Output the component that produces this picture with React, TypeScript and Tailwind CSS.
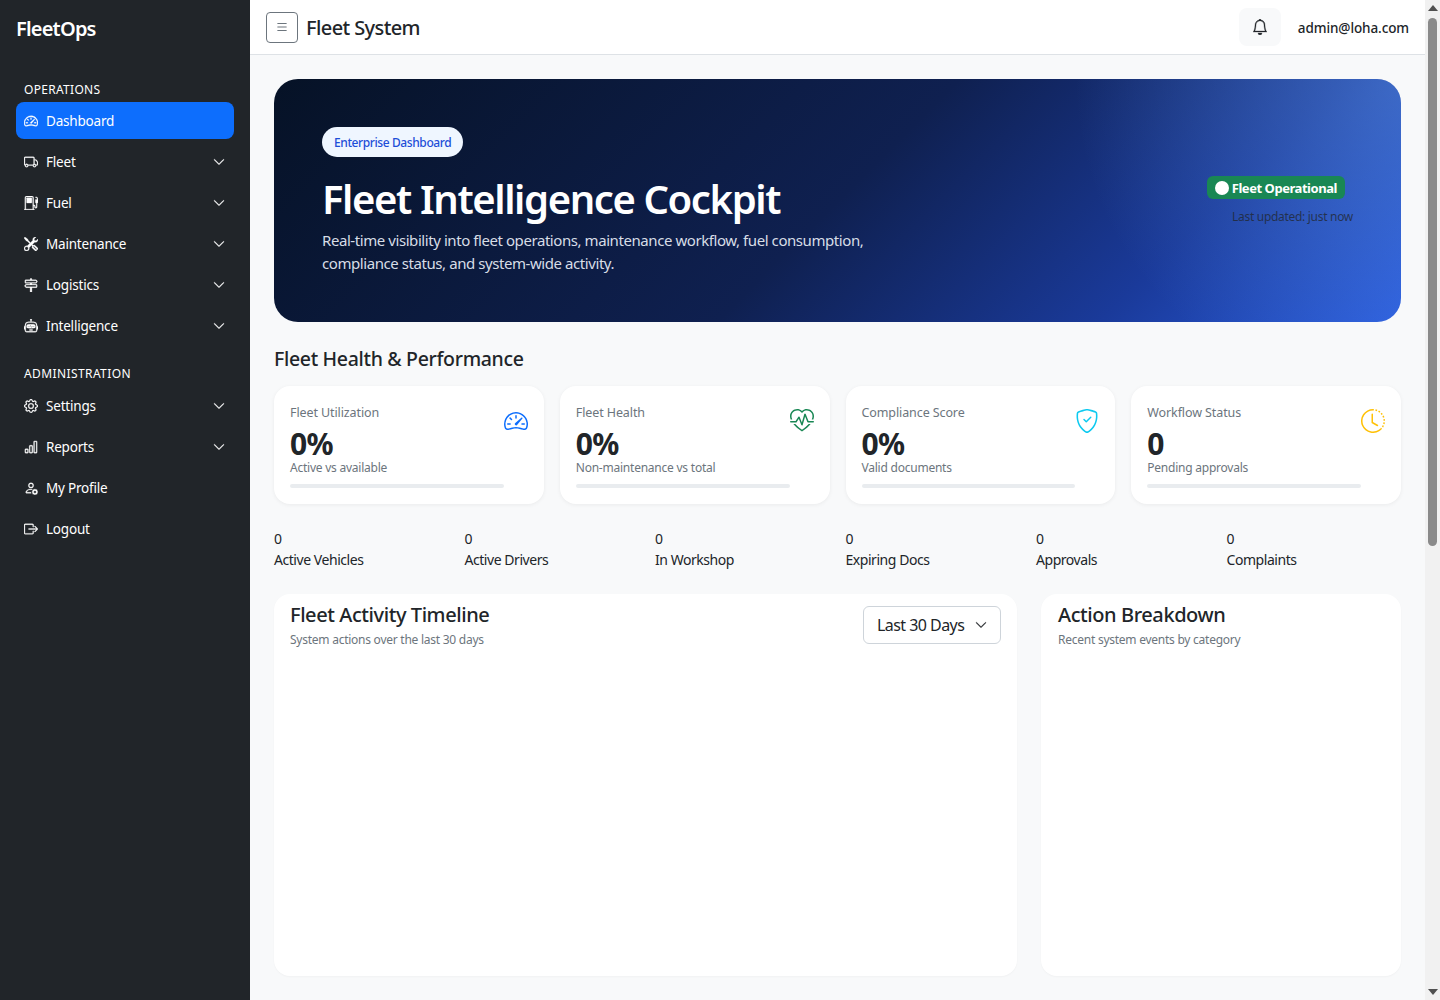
import React from "react";
import type { IconType } from "react-icons";
import {
  BsBarChart,
  BsBell,
  BsBoxArrowRight,
  BsChevronDown,
  BsClockHistory,
  BsFuelPump,
  BsGear,
  BsHeartPulse,
  BsList,
  BsPersonGear,
  BsRobot,
  BsShieldCheck,
  BsSignpost2,
  BsSpeedometer2,
  BsTools,
  BsTruck,
} from "react-icons/bs";

type NavEntry = { label: string; icon: IconType; chevron?: boolean; active?: boolean };

const operations: NavEntry[] = [
  { label: "Dashboard", icon: BsSpeedometer2, active: true },
  { label: "Fleet", icon: BsTruck, chevron: true },
  { label: "Fuel", icon: BsFuelPump, chevron: true },
  { label: "Maintenance", icon: BsTools, chevron: true },
  { label: "Logistics", icon: BsSignpost2, chevron: true },
  { label: "Intelligence", icon: BsRobot, chevron: true },
];

const administration: NavEntry[] = [
  { label: "Settings", icon: BsGear, chevron: true },
  { label: "Reports", icon: BsBarChart, chevron: true },
  { label: "My Profile", icon: BsPersonGear },
  { label: "Logout", icon: BsBoxArrowRight },
];

const kpis = [
  { title: "Fleet Utilization", value: "0%", note: "Active vs available", icon: BsSpeedometer2, color: "text-[#0d6efd]" },
  { title: "Fleet Health", value: "0%", note: "Non-maintenance vs total", icon: BsHeartPulse, color: "text-[#198754]" },
  { title: "Compliance Score", value: "0%", note: "Valid documents", icon: BsShieldCheck, color: "text-[#0dcaf0]" },
  { title: "Workflow Status", value: "0", note: "Pending approvals", icon: BsClockHistory, color: "text-[#ffc107]" },
];

const counters = ["Active Vehicles", "Active Drivers", "In Workshop", "Expiring Docs", "Approvals", "Complaints"];

function NavItem({ item }: { item: NavEntry }) {
  const Icon = item.icon;
  return (
    <a
      className={`flex h-[37px] items-center gap-[8px] rounded-[8px] px-[8px] mb-[4px] text-[13.5px] text-white tracking-[-0.2px] ${
        item.active ? "bg-[#0d6efd]" : ""
      }`}
    >
      <Icon className="h-[14px] w-[14px] shrink-0 stroke-[0.35]" />
      <span className="flex-1 pt-[2px]">{item.label}</span>
      {item.chevron && <BsChevronDown className="mr-[1px] h-[12px] w-[12px] stroke-[0.6]" />}
    </a>
  );
}

function Sidebar() {
  return (
    <aside className="flex h-screen w-[250px] shrink-0 flex-col bg-[#212529] px-[16px] text-white">
      <div className="flex h-[58px] items-center text-[20px] font-semibold tracking-[-0.8px]">FleetOps</div>
      <div className="mt-[23px] mb-[3px] flex h-[18px] items-center px-[8px] text-[12px] tracking-[0.3px]">OPERATIONS</div>
      {operations.map((item) => (
        <NavItem key={item.label} item={item} />
      ))}
      <div className="mt-[17px] mb-[4px] flex h-[18px] items-center px-[8px] text-[12px] tracking-[0.4px]">ADMINISTRATION</div>
      {administration.map((item) => (
        <NavItem key={item.label} item={item} />
      ))}
    </aside>
  );
}

function Topbar() {
  return (
    <header className="flex h-[55px] shrink-0 items-center border-b border-[#dee2e6] bg-white pl-[16px] pr-[16px]">
      <button className="flex h-[31px] w-[32px] items-center justify-center rounded-[4px] border border-[#6c757d] text-[#6c757d]">
        <BsList className="h-[14px] w-[14px]" />
      </button>
      <h1 className="ml-[8px] pt-[2px] text-[20px] font-medium tracking-[-0.6px] text-[#212529]">Fleet System</h1>
      <div className="ml-auto flex items-center gap-[17px]">
        <button className="flex h-[38px] w-[42px] items-center justify-center rounded-[8px] bg-[#f8f9fa] text-[#212529]">
          <BsBell className="h-[16px] w-[16px] stroke-[0.3]" />
        </button>
        <span className="pt-[2px] text-[13.5px] font-medium tracking-[-0.1px] text-[#212529]">admin@loha.com</span>
      </div>
    </header>
  );
}

function Hero() {
  return (
    <section className="relative flex h-[243px] items-start justify-between overflow-hidden rounded-[24px] bg-[linear-gradient(135deg,#061226_0%,#0f2050_50%,#1a3a9a_78%,#2a5cdc_100%)] pl-[48px] pr-[48px] pt-[48px]">
      <div className="absolute inset-y-0 right-0 w-[361px] bg-[radial-gradient(circle_at_100%_0%,rgba(120,180,255,0.35),rgba(120,180,255,0)_75%)]" />
      <div className="relative w-[600px]">
        <span className="inline-flex h-[30px] items-center rounded-full bg-[#eff6ff] px-[12px] pt-[1px] text-[12px] font-medium tracking-[-0.4px] text-[#1d4ed8]">
          Enterprise Dashboard
        </span>
        <h2 className="mt-[16px] text-[40px] leading-[52px] font-semibold tracking-[-1.4px] text-white">Fleet Intelligence Cockpit</h2>
        <p className="mt-[4px] text-[15px] leading-[23px] tracking-[-0.43px] text-[#d7dde6]">
          Real-time visibility into fleet operations, maintenance workflow, fuel consumption,
          <br />
          compliance status, and system-wide activity.
        </p>
      </div>
      <div className="relative mt-[49px] flex flex-col items-end">
        <span className="mr-[8px] flex h-[23px] items-center gap-[3px] rounded-[6px] bg-[#198754] px-[8px] text-[13px] font-bold tracking-[-0.45px] text-white">
          <span className="h-[14px] w-[14px] rounded-full bg-white" />
          <span className="pt-[2px]">Fleet Operational</span>
        </span>
        <span className="mt-[9px] text-[12px] tracking-[-0.3px] text-[rgba(33,37,41,0.75)]">Last updated: just now</span>
      </div>
    </section>
  );
}

function KpiCard({ kpi }: { kpi: (typeof kpis)[number] }) {
  const Icon = kpi.icon;
  return (
    <div className="flex h-[118px] rounded-[16px] bg-white p-[16px] shadow-[0_1px_4px_rgba(0,0,0,0.06)]">
      <div className="min-w-0 flex-1">
        <div className="pt-[1px] text-[12.5px] leading-[20px] tracking-[-0.1px] text-[#6c757d]">{kpi.title}</div>
        <div className="mt-[6px] text-[30px] leading-[30px] font-bold tracking-[-0.6px] text-[#212529]">{kpi.value}</div>
        <div className="text-[12px] leading-[18px] tracking-[-0.23px] text-[#6c757d]">{kpi.note}</div>
        <div className="mt-[7px] h-[4px] rounded-full bg-[#e9ecef]" />
      </div>
      <Icon className={`mt-[7px] h-[24px] w-[24px] shrink-0 ${kpi.color}`} />
    </div>
  );
}

function PanelHead({ title, note }: { title: string; note: string }) {
  return (
    <div>
      <h3 className="text-[20px] leading-[26px] font-medium tracking-[-0.42px] text-[#212529]">{title}</h3>
      <p className="mt-[3px] text-[12px] leading-[18px] tracking-[-0.25px] text-[#6c757d]">{note}</p>
    </div>
  );
}

function FakeScrollbar() {
  return (
    <div className="flex h-screen w-[15px] shrink-0 flex-col items-center bg-[#f1f1f1]">
      <div className="mt-[5px] h-0 w-0 border-x-[5px] border-b-[6px] border-x-transparent border-b-[#505050]" />
      <div className="mt-[7px] h-[528px] w-[9px] rounded-full bg-[#8a8a8a]" />
      <div className="mt-auto mb-[5px] h-0 w-0 border-x-[5px] border-t-[6px] border-x-transparent border-t-[#505050]" />
    </div>
  );
}

export default function App() {
  return (
    <div className="flex h-screen overflow-hidden bg-[#f8f9fa] font-['Noto_Sans',sans-serif]">
      <Sidebar />
      <div className="flex min-w-0 flex-1 flex-col">
        <Topbar />
        <main className="flex min-h-0 flex-1 flex-col overflow-hidden p-[24px]">
          <Hero />
          <h2 className="mt-[22px] text-[19.5px] leading-[30px] font-medium tracking-[-0.32px] text-[#212529]">Fleet Health &amp; Performance</h2>
          <div className="mt-[12px] grid grid-cols-4 gap-[16px]">
            {kpis.map((kpi) => (
              <KpiCard key={kpi.title} kpi={kpi} />
            ))}
          </div>
          <div className="mt-[24px] grid grid-cols-6 gap-[16px]">
            {counters.map((label) => (
              <div key={label} className="text-[14px] leading-[21px] tracking-[-0.45px] text-[#212529]">
                <div>0</div>
                <div>{label}</div>
              </div>
            ))}
          </div>
          <div className="mt-[24px] flex h-[382px] shrink-0 gap-[24px]">
            <div className="flex flex-1 items-start justify-between rounded-[16px] bg-white px-[16px] pt-[8px] shadow-[0_1px_2px_rgba(0,0,0,0.03)]">
              <PanelHead title="Fleet Activity Timeline" note="System actions over the last 30 days" />
              <button className="mt-[4px] flex h-[38px] w-[138px] items-center justify-between rounded-[6px] border border-[#ced4da] px-[13px] text-[16px] tracking-[-0.55px] text-[#212529]">
                Last 30 Days
                <BsChevronDown className="h-[12px] w-[12px] stroke-[0.6]" />
              </button>
            </div>
            <div className="w-[360px] rounded-[16px] bg-white pl-[17px] pr-[16px] pt-[8px] shadow-[0_1px_2px_rgba(0,0,0,0.03)]">
              <PanelHead title="Action Breakdown" note="Recent system events by category" />
            </div>
          </div>
        </main>
      </div>
      <FakeScrollbar />
    </div>
  );
}
